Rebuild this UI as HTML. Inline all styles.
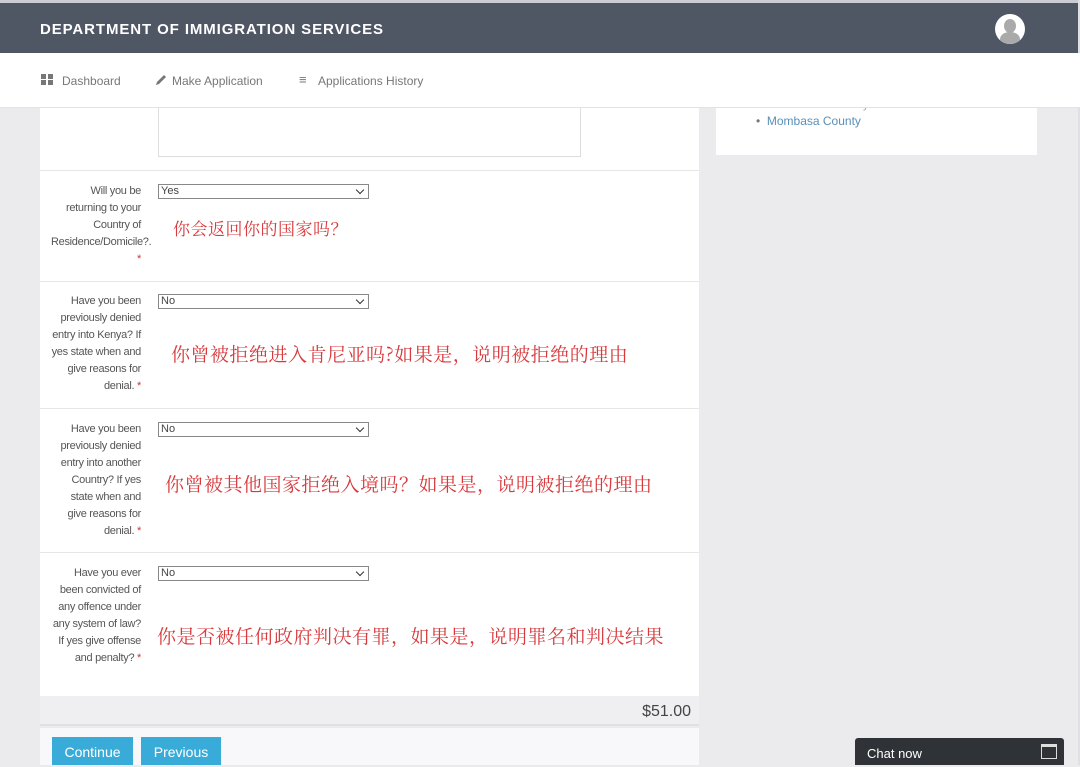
<!DOCTYPE html>
<html><head><meta charset="utf-8"><style>
*{margin:0;padding:0;box-sizing:border-box}
body{width:1080px;height:765px;overflow:hidden;background:#ebebed;font-family:"Liberation Sans",sans-serif;position:relative}
.abs{position:absolute}
.hdr{left:0;top:0;width:1078px;height:53px;background:#4f5664;border-top:3px solid #c9ccd2;z-index:5}
.hdr .t{left:40px;top:18px;color:#fff;font-weight:bold;font-size:15px;letter-spacing:.9px}
.nav{left:0;top:53px;width:1080px;height:55px;background:#fff;border-bottom:1px solid #e2e2e2;z-index:5}
.nav span{position:absolute;top:21px;font-size:12px;color:#777}
.panel{left:40px;top:108px;width:659px;height:588px;background:#fff}
.row{position:absolute;left:0;width:659px;border-bottom:1px solid #e6e6e6}
.lbl{position:absolute;left:11px;width:90px;text-align:right;font-size:11px;line-height:17px;color:#555;letter-spacing:-.3px}
.sel{position:absolute;left:118px;width:211px;height:15px;border:1px solid #888;font-size:11px;line-height:13px;padding-left:2px;color:#444;background:#fff}
.sel:after{content:"";position:absolute;right:5px;top:2px;width:5px;height:5px;border-right:1.5px solid #333;border-bottom:1.5px solid #333;transform:rotate(45deg)}
.cn{position:absolute;font-family:"Noto Serif CJK SC","Liberation Serif",serif;color:#d8393c;font-size:19px;white-space:nowrap;letter-spacing:.5px}
.star{color:#c33}
</style></head><body>
<div class="abs hdr"><div class="abs t">DEPARTMENT OF IMMIGRATION SERVICES</div>
<div class="abs" style="left:995px;top:11px;width:30px;height:30px;border-radius:50%;background:#fff;overflow:hidden"><div class="abs" style="left:9px;top:5px;width:12px;height:14px;border-radius:50%;background:#aaa"></div><div class="abs" style="left:5px;top:18px;width:20px;height:14px;border-radius:50% 50% 0 0;background:#aaa"></div></div></div>
<div class="abs nav">
<div class="abs" style="left:41px;top:21px;width:5px;height:5px;background:#777;box-shadow:7px 0 #777,0 6px #777,7px 6px #777"></div>
<span style="left:62px">Dashboard</span>
<svg class="abs" style="left:155px;top:21px" width="12" height="12" viewBox="0 0 12 12"><path d="M1 11 L2 8 L9 1 L11 3 L4 10 Z" fill="#777"/></svg>
<span style="left:172px">Make Application</span>
<span style="left:299px;top:19px;font-size:13px">&#8801;</span>
<span style="left:318px">Applications History</span>
</div>
<div class="abs panel">
<div class="row" style="top:0;height:63px"><div class="abs" style="left:118px;top:0;width:423px;height:49px;border:1px solid #ddd;border-top:none"></div></div>
<div class="row" style="top:63px;height:111px">
<div class="lbl" style="top:12px">Will you be returning to your Country of Residence/Domicile?. <span class="star">*</span></div>
<div class="sel" style="top:13px">Yes</div>
<div class="cn" style="left:133px;top:44px;font-size:17px">你会返回你的国家吗？</div></div>
<div class="row" style="top:174px;height:127px">
<div class="lbl" style="top:11px">Have you been previously denied entry into Kenya? If yes state when and give reasons for denial. <span class="star">*</span></div>
<div class="sel" style="top:12px">No</div>
<div class="cn" style="left:131px;top:58px">你曾被拒绝进入肯尼亚吗?如果是，说明被拒绝的理由</div></div>
<div class="row" style="top:301px;height:144px">
<div class="lbl" style="top:12px">Have you been previously denied entry into another Country? If yes state when and give reasons for denial. <span class="star">*</span></div>
<div class="sel" style="top:13px">No</div>
<div class="cn" style="left:125px;top:61px">你曾被其他国家拒绝入境吗？如果是，说明被拒绝的理由</div></div>
<div class="row" style="top:445px;height:143px;border:none">
<div class="lbl" style="top:12px">Have you ever been convicted of any offence under any system of law? If yes give offense and penalty? <span class="star">*</span></div>
<div class="sel" style="top:13px">No</div>
<div class="cn" style="left:117px;top:69px">你是否被任何政府判决有罪，如果是，说明罪名和判决结果</div></div>
</div>
<div class="abs" style="left:40px;top:696px;width:659px;height:30px;background:#efeff1;border-bottom:2px solid #e0e0e2"><div class="abs" style="right:8px;top:7px;font-size:16px;color:#444">$51.00</div></div>
<div class="abs" style="left:40px;top:728px;width:659px;height:37px;background:#f8f8fa"></div>
<div class="abs" style="left:52px;top:737px;width:81px;height:28px;background:#39abd9;color:#fff;font-size:14px;text-align:center;line-height:30px">Continue</div>
<div class="abs" style="left:141px;top:737px;width:80px;height:28px;background:#39abd9;color:#fff;font-size:14px;text-align:center;line-height:30px">Previous</div>
<div class="abs" style="left:716px;top:108px;width:321px;height:47px;background:#fff">
<div class="abs" style="left:50px;top:-9px;font-size:11px;color:#999">Office of the Attorney General</div>
<div class="abs" style="left:40px;top:6px;font-size:12px;color:#5a8fb8"><span style="color:#777">•</span>&nbsp; Mombasa County</div></div>
<div class="abs" style="left:1078px;top:0;width:2px;height:765px;background:#dfe0e4"></div>
<div class="abs" style="left:855px;top:738px;width:209px;height:27px;background:#2f3338;border-radius:3px 3px 0 0">
<div class="abs" style="left:12px;top:8px;font-size:13px;color:#fff">Chat now</div>
<div class="abs" style="left:186px;top:6px;width:16px;height:15px;border:1.5px solid #ddd;border-top-width:3px"></div></div>
</body></html>
